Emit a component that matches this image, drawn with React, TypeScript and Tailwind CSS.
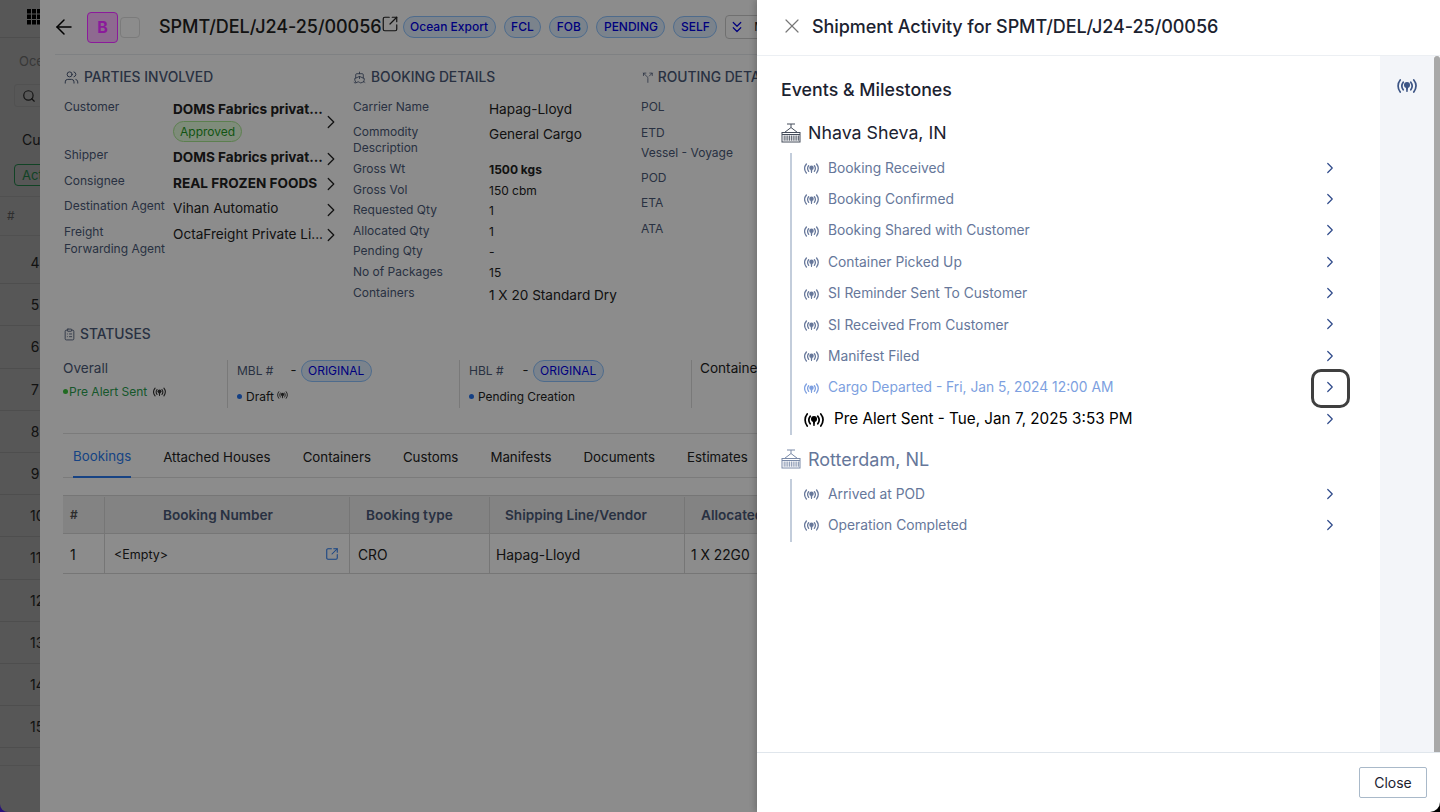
import type { ReactNode } from 'react'
import { ChevronRight, X, ArrowLeft, ChevronsDown, Users, ClipboardList, Split, Search, Ship, SquareArrowOutUpRight } from 'lucide-react'

const Beacon = ({ className }: { className: string }) => (
  <svg viewBox="0 0 20 14" fill="none" className={className}>
    <path d="M3.2 1C.4 4.5.4 9.5 3.2 13M16.8 1c2.8 3.5 2.8 8 0 12M6.2 3.2C4.6 5.4 4.6 8.6 6.2 10.8M13.8 3.2c1.6 2.2 1.6 5.4 0 7.6" stroke="currentColor" strokeWidth="1.7" strokeLinecap="round" />
    <circle cx="10" cy="6" r="3" fill="currentColor" />
    <path d="M8.8 8h2.4l-.6 5h-1.2z" fill="currentColor" />
  </svg>
)

const ribs = [3.2, 5, 6.8, 8.6, 10.4, 12.2, 14, 15.8, 17.6]

const Crane = ({ className }: { className: string }) => (
  <svg viewBox="0 0 20 20" fill="none" stroke="currentColor" strokeWidth="1" className={className}>
    <path d="M6 1h8M10 1v3.5M10 4.5 3.5 9.5M10 4.5l6.5 5" />
    <rect x="1" y="9.5" width="18" height="9.5" />
    <path d="M1 11.5h18" />
    {ribs.map((x) => (
      <path key={x} d={`M${x} 12.5v5.2`} strokeWidth="0.9" />
    ))}
  </svg>
)

const Grip = () => (
  <svg viewBox="0 0 14 16" className="w-[14px] h-[16px] text-black" fill="currentColor">
    {[0, 5.5, 11].map((y) =>
      [0, 5, 10].map((x) => <rect key={`${x}-${y}`} x={x} y={y} width="4" height="4.5" />),
    )}
  </svg>
)

const Pill = ({ children }: { children: string }) => (
  <span className="h-[22px] px-[6.5px] flex items-center rounded-full border border-[#8fc4ff] bg-[#e0efff] text-[12px] font-medium text-[#0000e6] whitespace-nowrap">{children}</span>
)

const SectionHead = ({ icon, children, gap }: { icon: ReactNode; children: string; gap: string }) => (
  <div className={`flex items-center h-[16px] mb-[13px] text-[#4b5a78] font-medium text-[13.8px] whitespace-nowrap ${gap}`}>
    {icon}
    {children}
  </div>
)

const Party = ({ label, value, bold, h, children }: { label: string; value: string; bold?: boolean; h: string; children?: ReactNode }) => (
  <div className={`flex ${h}`}>
    <div className="w-[109px] pr-[4px] shrink-0 text-[12px] leading-[17px] text-[#4b5a78]">{label}</div>
    <div className="w-[153px] relative mt-[1px]">
      <div className={`text-[13.6px] leading-[20px] text-[#222] whitespace-nowrap ${bold ? 'font-bold' : ''}`}>{value}</div>
      {children}
      <ChevronRight className={`w-[22px] h-[22px] text-[#222] absolute right-[-15.5px] ${children ? 'top-[12px]' : 'top-[0.5px]'}`} strokeWidth={1.4} />
    </div>
  </div>
)

const Detail = ({ label, value, h, big, bold }: { label: string; value: string; h: string; big?: boolean; bold?: boolean }) => (
  <div className={`flex pt-[0.5px] ${h}`}>
    <div className="w-[136px] pr-[40px] shrink-0 text-[12px] leading-[16.5px] text-[#4b5a78]">{label}</div>
    {big ? (
      <div className="text-[13.6px] leading-[20px] mt-[0.5px] text-[#222] whitespace-nowrap">{value}</div>
    ) : (
      <div className={`text-[12px] leading-[17px] text-[#222] whitespace-nowrap ${bold ? 'font-bold' : ''}`}>{value}</div>
    )}
  </div>
)

const Routing = ({ label, h }: { label: string; h: string }) => (
  <div className={`text-[12px] leading-[17px] text-[#4b5a78] ${h}`}>{label}</div>
)

const originalPill = <span className="h-[22px] px-[6.5px] flex items-center rounded-full border border-[#8fc4ff] bg-[#e0efff] text-[12px] text-[#0000e6]">ORIGINAL</span>

const events = [
  'Booking Received',
  'Booking Confirmed',
  'Booking Shared with Customer',
  'Container Picked Up',
  'SI Reminder Sent To Customer',
  'SI Received From Customer',
  'Manifest Filed',
]

const EventRow = ({ text, tone = 'text-[#66779a]', focus }: { text: string; tone?: string; focus?: boolean }) => (
  <div className={`h-[31.4px] w-[546px] flex items-center ${tone}`}>
    <Beacon className="w-[15px] h-[11px] mr-[9px] shrink-0" />
    <span className="text-[13.8px] flex-1 -mt-[1px]">{text}</span>
    <div className={`w-[39px] h-[39px] shrink-0 rounded-[10px] flex items-center justify-center ${focus ? 'border-[3px] border-[#3f3f3f]' : ''}`}>
      <ChevronRight className="w-[18px] h-[18px] text-[#2f4a8a] -mt-[2px] -ml-[1px]" strokeWidth={1.6} />
    </div>
  </div>
)

const rowNumbers = ['4', '5', '6', '7', '8', '9', '10', '11', '12', '13', '14', '15']
const tabs = ['Attached Houses', 'Containers', 'Customs', 'Manifests', 'Documents', 'Estimates']

export default function App() {
  return (
    <div className="relative w-[1440px] h-[812px] overflow-hidden bg-black flex font-['Inter',sans-serif]">
      {/* page behind the modal */}
      <div className="w-[40px] shrink-0 relative bg-[#4a20e0]">
        <div className="h-full w-full bg-[#9e9e9e] rounded-bl-[8px] overflow-hidden text-[14px] text-[#222] flex flex-col">
          <div className="h-[38px] shrink-0 border-b border-[#8f8f8f] pl-[27px] pt-[9px]"><Grip /></div>
          <div className="pl-[19px] mt-[14px] h-[18px] text-[#666] text-[13px] whitespace-nowrap">Oceans</div>
          <div className="ml-[14px] mt-[14px] w-[60px] h-[23px] shrink-0 border border-[#949494] rounded-[3px] flex items-center pl-[7px]">
            <Search className="w-[14px] h-[14px] text-[#222]" />
          </div>
          <div className="pl-[22px] mt-[22px] h-[20px] whitespace-nowrap">Customers</div>
          <div className="ml-[14px] mt-[15px] w-[60px] h-[22px] shrink-0 border border-[#1f7a44] rounded-[4px] text-[#1f7a44] pl-[7px] text-[13px] leading-[20px]">Active</div>
          <div className="mt-[10px] h-[40px] shrink-0 border-y border-[#929292] flex items-center pl-[7px] text-[#555] text-[12px]">#</div>
          <div className="h-[6px] shrink-0" />
          {rowNumbers.map((n) => (
            <div key={n} className="h-[42.2px] shrink-0 border-b border-[#8f8f8f] flex items-center pl-[30px]">
              <span className="w-[17px] text-center whitespace-nowrap">{n}</span>
            </div>
          ))}
          <div className="h-[18px] shrink-0 border-b border-[#929292]" />
        </div>
      </div>

      <div className="w-[717px] shrink-0 bg-white pl-[24px] overflow-hidden">
        <div className="h-[55px] flex items-center border-b border-[#e8ebef] -ml-[9px] pl-[9px]">
          <ArrowLeft className="w-[24px] h-[24px] text-black -ml-[12.5px] mr-[11.5px] shrink-0" strokeWidth={1.5} />
          <div className="relative z-10 w-[31px] h-[31px] shrink-0 rounded-[4px] bg-[#8e6a90] border border-[#8b1a9b] text-[#8b1a9b] font-bold text-[16px] flex items-center justify-center">B</div>
          <div className="w-[20px] h-[21px] shrink-0 rounded-[4px] border border-[#e0e0e0] ml-[2px]" />
          <span className="ml-[19px] text-[18px] font-medium text-[#222] whitespace-nowrap -mt-[1px] tracking-[-0.05px]">SPMT/DEL/J24-25/00056</span>
          <SquareArrowOutUpRight className="w-[18px] h-[18px] text-[#222] -mt-[6px] -ml-[1px] shrink-0" strokeWidth={1.6} />
          <div className="flex items-center gap-2 ml-[4px] shrink-0">
            <Pill>Ocean Export</Pill>
            <Pill>FCL</Pill>
            <Pill>FOB</Pill>
            <Pill>PENDING</Pill>
            <Pill>SELF</Pill>
            <div className="w-[60px] h-[24px] rounded-[4px] border border-[#ccc] flex items-center pl-[2px] shrink-0">
              <ChevronsDown className="w-[18px] h-[18px] text-[#0000e6] mr-[8px]" strokeWidth={1.6} />
              <span className="text-[12px] text-[#222]">More</span>
            </div>
          </div>
        </div>

        <div className="flex mt-[14px] h-[257px]">
          <div className="w-[289px] shrink-0">
            <SectionHead gap="gap-[5px]" icon={<Users className="w-[15px] h-[15px]" strokeWidth={1.6} />}>PARTIES INVOLVED</SectionHead>
            <Party label="Customer" value="DOMS Fabrics privat..." bold h="h-[48px]">
              <span className="block w-fit mt-[2px] h-[21px] leading-[19px] px-[6px] rounded-full border border-[#a8e890] bg-[#e8ffe0] text-[#1f9a1f] text-[12px]">Approved</span>
            </Party>
            <Party label="Shipper" value="DOMS Fabrics privat..." bold h="h-[25.5px]" />
            <Party label="Consignee" value="REAL FROZEN FOODS" bold h="h-[25.5px]" />
            <Party label="Destination Agent" value="Vihan Automatio" h="h-[25.5px]" />
            <Party label="Freight Forwarding Agent" value="OctaFreight Private Li..." h="h-[34px]" />
          </div>
          <div className="w-[288px] shrink-0">
            <SectionHead gap="gap-[5px]" icon={<Ship className="w-[13px] h-[13px]" strokeWidth={1.6} />}>BOOKING DETAILS</SectionHead>
            <Detail label="Carrier Name" value="Hapag-Lloyd" h="h-[25px]" big />
            <Detail label="Commodity Description" value="General Cargo" h="h-[37px]" big />
            <Detail label="Gross Wt" value="1500 kgs" h="h-[21px]" bold />
            <Detail label="Gross Vol" value="150 cbm" h="h-[20.5px]" />
            <Detail label="Requested Qty" value="1" h="h-[20.5px]" />
            <Detail label="Allocated Qty" value="1" h="h-[20.5px]" />
            <Detail label="Pending Qty" value="-" h="h-[20.5px]" />
            <Detail label="No of Packages" value="15" h="h-[21px]" />
            <Detail label="Containers" value="1 X 20 Standard Dry" h="h-[21px]" big />
          </div>
          <div className="shrink-0 w-[140px]">
            <SectionHead gap="gap-[4px] pl-[1px]" icon={<Split className="w-[15px] h-[15px]" strokeWidth={1.6} />}>ROUTING DETAILS</SectionHead>
            <Routing label="POL" h="h-[25.5px]" />
            <Routing label="ETD" h="h-[20.5px]" />
            <Routing label="Vessel - Voyage" h="h-[25px]" />
            <Routing label="POD" h="h-[25px]" />
            <Routing label="ETA" h="h-[26px]" />
            <Routing label="ATA" h="h-[20px]" />
          </div>
        </div>

        <div className="-ml-[1px]">
          <SectionHead gap="gap-[4px]" icon={<ClipboardList className="w-[13px] h-[13px]" strokeWidth={1.6} />}>STATUSES</SectionHead>

          <div className="flex h-[48px] mt-[18px]">
            <div className="w-[164px] shrink-0">
              <div className="text-[13.6px] leading-[17px] text-[#4b5a78]">Overall</div>
              <div className="flex items-center mt-[6px] h-[17px] text-[12px] text-[#2aa04f]">
                <span className="w-[5px] h-[5px] rounded-full bg-[#3cc33c] mr-[1px]" />
                <span>Pre Alert Sent</span>
                <Beacon className="w-[13px] h-[10px] ml-[6px] text-[#333]" />
              </div>
            </div>
            <div className="w-[232px] shrink-0 border-l border-[#dcdcdc] pl-[9px]">
              <div className="flex items-center h-[22px]">
                <span className="w-[53.5px] text-[12px] text-[#4b5a78]">MBL #</span>
                <span className="w-[10px] text-[13px] text-[#222]">-</span>
                {originalPill}
              </div>
              <div className="flex items-center mt-[6px] h-[17px] text-[12px] text-[#222]">
                <span className="w-[5px] h-[5px] rounded-full bg-[#2474f0] mr-[4px]" />
                Draft
                <Beacon className="w-[11px] h-[8px] ml-[3px] -mt-[3px] text-[#333]" />
              </div>
            </div>
            <div className="w-[232px] shrink-0 border-l border-[#dcdcdc] pl-[9px]">
              <div className="flex items-center h-[22px]">
                <span className="w-[53.5px] text-[12px] text-[#4b5a78]">HBL #</span>
                <span className="w-[10px] text-[13px] text-[#222]">-</span>
                {originalPill}
              </div>
              <div className="flex items-center mt-[6px] h-[17px] text-[11.9px] text-[#222]">
                <span className="w-[5px] h-[5px] rounded-full bg-[#2474f0] mr-[4px]" />
                Pending Creation
              </div>
            </div>
            <div className="border-l border-[#dcdcdc] pl-[8px] text-[13.6px] leading-[17px] text-[#222] whitespace-nowrap">Containers</div>
          </div>

          <div className="h-[45px] mt-[25px] border-y border-[#e0e0e0] flex gap-[32px] pl-[10px] text-[13.3px] text-[#222] whitespace-nowrap">
            <div className="h-[44px] -mb-[1px] pt-[3px] flex items-center border-b-2 border-[#2a7bf0] text-[#2a7bf0]">Bookings</div>
            {tabs.map((t) => (
              <div key={t} className="h-[44px] pt-[3px] flex items-center">{t}</div>
            ))}
          </div>

          <div className="mt-[17px] w-[760px]">
            <div className="grid grid-cols-[41px_245px_140px_195px_1fr] h-[39px] pt-[1px] bg-[#eeeeee] border-y border-[#d8d8d8] text-[13.6px] font-semibold text-[#4b5a78] whitespace-nowrap">
              <div className="flex items-center pl-[7px] text-[12px] text-[#555]">#</div>
              <div className="flex items-center pl-[58px] border-l border-[#d8d8d8]">Booking Number</div>
              <div className="flex items-center pl-[16px] border-l border-[#d8d8d8]">Booking type</div>
              <div className="flex items-center pl-[15px] border-l border-[#d8d8d8]">Shipping Line/Vendor</div>
              <div className="flex items-center pl-[16px] border-l border-[#d8d8d8]">Allocated Qty</div>
            </div>
            <div className="grid grid-cols-[41px_245px_140px_195px_1fr] h-[40px] border-b border-[#d8d8d8] text-[13.8px] text-[#222] whitespace-nowrap">
              <div className="flex items-center pl-[7px] pt-[2px] text-[14px]">1</div>
              <div className="flex items-center justify-between pl-[9px] pr-[10px] pt-[4px] border-l border-[#d8d8d8] text-[12.5px]">
                &lt;Empty&gt;
                <SquareArrowOutUpRight className="w-[14px] h-[14px] text-[#2a7bf0] -mt-[4px]" strokeWidth={1.8} />
              </div>
              <div className="flex items-center pl-[8px] pt-[4px] border-l border-[#d8d8d8]">CRO</div>
              <div className="flex items-center pl-[6px] pt-[4px] border-l border-[#d8d8d8]">Hapag-Lloyd</div>
              <div className="flex items-center pl-[6px] pt-[4px] border-l border-[#d8d8d8]">1 X 22G0</div>
            </div>
          </div>
        </div>
      </div>

      <div className="absolute left-0 top-0 bottom-0 w-[757px] bg-black/45" />

      {/* activity drawer */}
      <div className="absolute right-0 top-0 bottom-0 w-[683px] bg-white rounded-br-[10px] flex flex-col shadow-[-2px_0_6px_rgba(0,0,0,0.2)]">
        <div className="h-[56px] shrink-0 flex items-center border-b border-[#eceff3] pl-[23px]">
          <X className="w-[24px] h-[24px] text-[#777] -mt-[3px]" strokeWidth={1.2} />
          <span className="ml-[8px] text-[18px] font-medium text-[#1b2230] tracking-[-0.07px] -mt-[3px]">Shipment Activity for SPMT/DEL/J24-25/00056</span>
        </div>
        <div className="flex-1 flex min-h-0">
          <div className="w-[623px] pl-[24px] pt-[21px]">
            <div className="text-[17.8px] font-medium text-[#1b2230] leading-[25px]">Events &amp; Milestones</div>

            <div className="flex items-center mt-[20.5px] h-[21px] text-[#1b2230]">
              <Crane className="w-[20px] h-[20px] mr-[7px] text-[#444c5a]" />
              <span className="text-[17.8px]">Nhava Sheva, IN</span>
            </div>
            <div className="mt-[9.3px] ml-[9px] pl-[12px] border-l-2 border-[#c3cddb]">
              {events.map((e) => (
                <EventRow key={e} text={e} />
              ))}
              <EventRow text="Cargo Departed - Fri, Jan 5, 2024 12:00 AM" tone="text-[#7d9fe0]" focus />
              <div className="h-[31.4px] w-[546px] flex items-center text-black">
                <Beacon className="w-[20px] h-[14px] mr-[10px] shrink-0" />
                <span className="text-[15.25px] flex-1">Pre Alert Sent - Tue, Jan 7, 2025 3:53 PM</span>
                <div className="w-[39px] flex justify-center">
                  <ChevronRight className="w-[18px] h-[18px] text-[#2f4a8a] -mt-[2px] -ml-[1px]" strokeWidth={1.6} />
                </div>
              </div>
            </div>

            <div className="flex items-center mt-[13.2px] h-[21px] text-[#66779a]">
              <Crane className="w-[20px] h-[20px] mr-[7px] text-[#7a8aa8]" />
              <span className="text-[18px]">Rotterdam, NL</span>
            </div>
            <div className="mt-[9.3px] ml-[9px] pl-[12px] border-l-2 border-[#c3cddb]">
              <EventRow text="Arrived at POD" />
              <EventRow text="Operation Completed" />
            </div>
          </div>
          <div className="w-[54px] bg-[#f3f5f9] flex justify-center pt-[23px]">
            <Beacon className="w-[20px] h-[14px] text-[#3d5585] -ml-[1px]" />
          </div>
          <div className="w-[6px] bg-[#a8a8a8] rounded-t-[3px]" />
        </div>
        <div className="h-[60px] shrink-0 border-t border-[#e0e6ec] flex items-center justify-end pr-[13px]">
          <button className="w-[68px] h-[31px] border border-[#a9b9c9] rounded-[2px] text-[14px] text-[#1b2230]">Close</button>
        </div>
      </div>
    </div>
  )
}
